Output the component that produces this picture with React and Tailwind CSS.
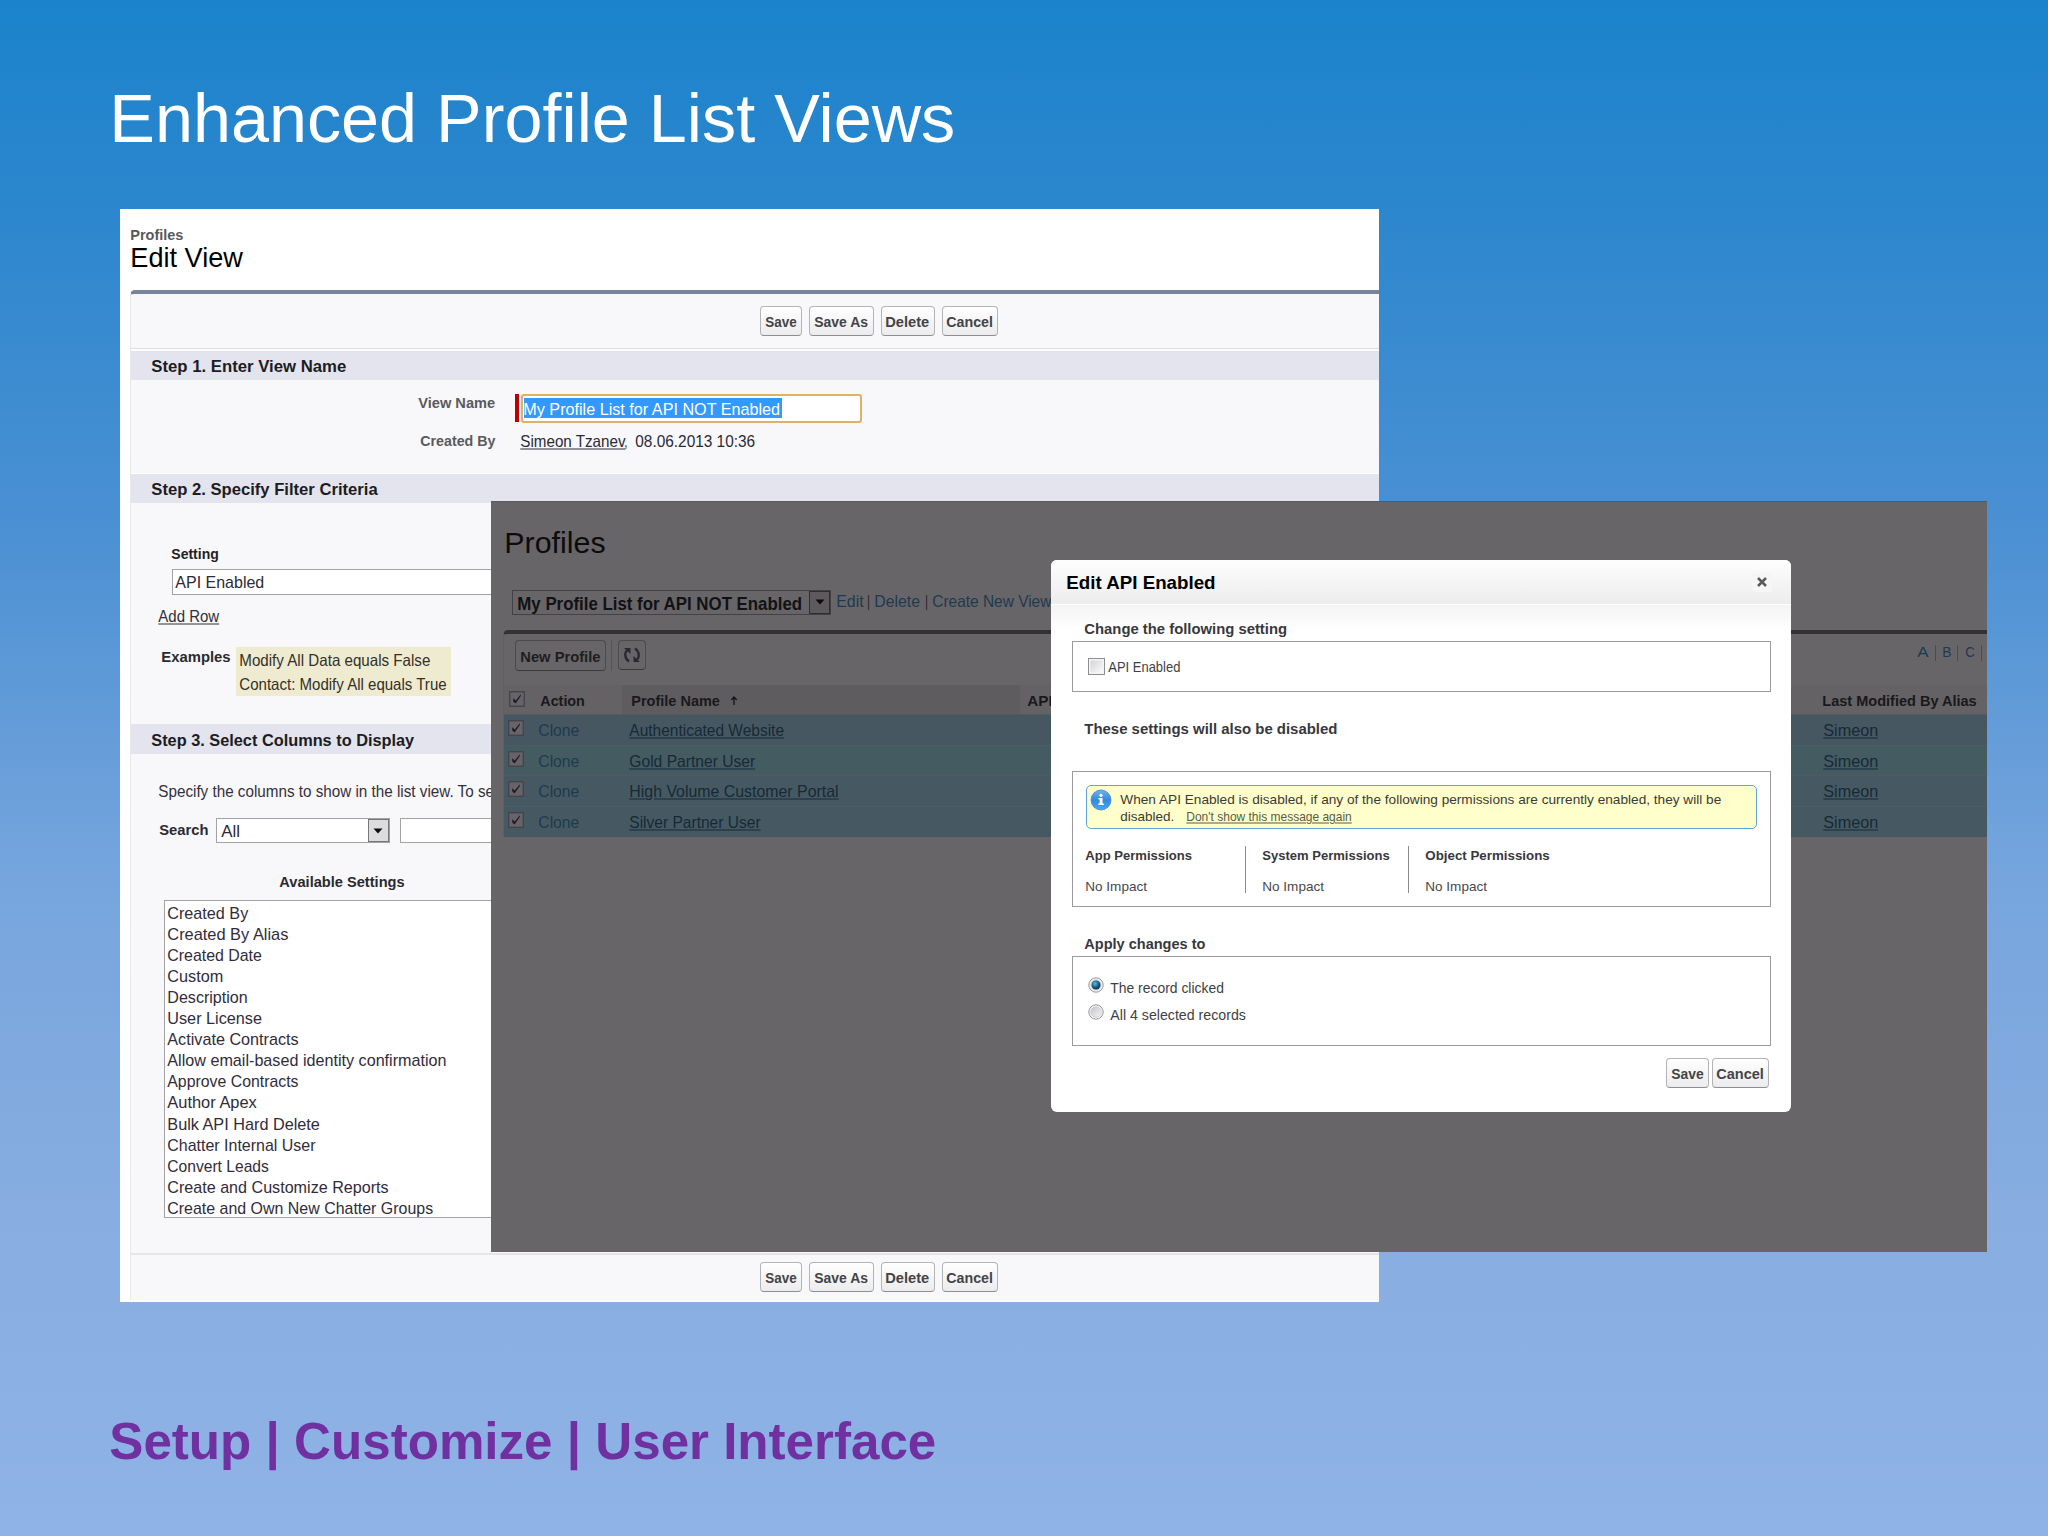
import { useLayoutEffect, useRef, useState } from "react";

// Stretches a single line of text to the width of its box.
function Fit({ className = "", inner = "", children }) {
  const box = useRef(null);
  const text = useRef(null);
  const [scale, setScale] = useState(1);
  useLayoutEffect(() => {
    const w = box.current.getBoundingClientRect().width;
    const n = text.current.offsetWidth;
    if (n) setScale((w + 0.9) / n);
  }, [children]);
  return (
    <span ref={box} className={`block h-5 shrink-0 leading-5 whitespace-nowrap ${className}`}>
      <span
        ref={text}
        className={`inline-block origin-left whitespace-nowrap ${inner}`}
        style={{ transform: `translate(-0.7px, 0.5px) scaleX(${scale})` }}
      >
        {children}
      </span>
    </span>
  );
}

function Button({ className, w, children }) {
  return (
    <div
      className={`flex shrink-0 items-center justify-center rounded-[4px] border-[1.5px] border-[#b4b4b6] border-b-[#8e8e90] bg-linear-to-b from-white to-[#ececee] ${className}`}
    >
      <Fit className={`text-[15px] font-bold text-[#444446] ${w}`}>{children}</Fit>
    </div>
  );
}

function ButtonRow({ className = "" }) {
  return (
    <div className={`flex ${className}`}>
      <Button className="h-[30px] w-[42px]" w="w-[30.5px]">Save</Button>
      <Button className="ml-[7px] h-[30px] w-[65px]" w="w-[53px]">Save As</Button>
      <Button className="ml-[7px] h-[30px] w-[53.5px]" w="w-[43px]">Delete</Button>
      <Button className="ml-[7.5px] h-[30px] w-[56px]" w="w-[45.5px]">Cancel</Button>
    </div>
  );
}

function Band({ className = "", w, children }) {
  return (
    <div className={`flex items-center bg-[#e3e4ee] pl-[21.5px] ${className}`}>
      <Fit className={`text-[17px] font-bold text-[#1c1c22] ${w}`}>{children}</Fit>
    </div>
  );
}

function Caret() {
  return (
    <svg viewBox="0 0 10 6" className="h-[6px] w-[10px]">
      <path d="M0.5 0.5h9L5 5.5z" fill="#0c0c0c" />
    </svg>
  );
}

const SETTINGS = [
  ["Created By", "w-[80px]"],
  ["Created By Alias", "w-[120.5px]"],
  ["Created Date", "w-[93.5px]"],
  ["Custom", "w-[55.5px]"],
  ["Description", "w-[79.5px]"],
  ["User License", "w-[93.5px]"],
  ["Activate Contracts", "w-[130.5px]"],
  ["Allow email-based identity confirmation", "w-[278.5px]"],
  ["Approve Contracts", "w-[130.5px]"],
  ["Author Apex", "w-[89px]"],
  ["Bulk API Hard Delete", "w-[152px]"],
  ["Chatter Internal User", "w-[147.5px]"],
  ["Convert Leads", "w-[101px]"],
  ["Create and Customize Reports", "w-[220px]"],
  ["Create and Own New Chatter Groups", "w-[264.5px]"],
];

function EditView() {
  return (
    <div className="absolute top-[209px] left-[120px] flex h-[1093px] w-[1259px] flex-col overflow-hidden bg-white">
      <div className="h-[81px] shrink-0 pt-[15.3px] pl-[10.5px]">
        <Fit className="w-[52px] text-[14.5px] font-bold text-[#58585c]">Profiles</Fit>
        <Fit className="mt-[3px] w-[111.5px] text-[28px] text-black">Edit View</Fit>
      </div>
      <div className="ml-[9.5px] flex h-[1010px] shrink-0 flex-col rounded-tl-[5px] border-t-[4px] border-l border-t-[#76859a] border-l-[#e8e8ea] bg-[#f8f8fa]">
        <div className="h-[55px] shrink-0 border-b border-[#dfdfe2] pt-[12px] pl-[629.5px]">
          <ButtonRow />
        </div>
        <div className="h-[2px] shrink-0 bg-[#fdfdfd]" />
        <Band className="h-[29px] shrink-0 pt-[1px]" w="w-[194px]">Step 1. Enter View Name</Band>
        <div className="h-[93px] shrink-0 pt-[11.7px]">
          <div className="flex h-[36px] items-start">
            <Fit className="ml-[288px] w-[76px] text-[15px] font-bold text-[#5a5a5e]">View Name</Fit>
            <div className="mt-[2.3px] ml-[20.2px] h-[28.5px] w-[4px] bg-[#c00000]" />
            <div className="mt-[2.6px] ml-[2.4px] h-[28.4px] w-[341px] rounded-[3px] border-[2px] border-[#dfb164] bg-white pt-[1.4px] pl-[1px]">
              <div className="h-[20px] w-[257.5px] bg-[#3399ff]">
                <Fit className="w-[256px] text-[17px] text-white" inner="leading-[21px]">
                  My Profile List for API NOT Enabled
                </Fit>
              </div>
            </div>
          </div>
          <div className="mt-[2.5px] flex">
            <Fit className="ml-[290.5px] w-[74px] text-[15px] font-bold text-[#5a5a5e]">Created By</Fit>
            <Fit className="ml-[25.5px] w-[104px] text-[16.5px] text-[#2a2a36]" inner="underline underline-offset-2">
              Simeon Tzanev
            </Fit>
            <Fit className="ml-[0.5px] w-[2.5px] text-[16.5px] text-[#2a2a36]">,</Fit>
            <Fit className="ml-[8px] w-[118.5px] text-[16.5px] text-[#2a2a36]">08.06.2013 10:36</Fit>
          </div>
        </div>
        <div className="h-px shrink-0 bg-white" />
        <Band className="h-[29px] shrink-0 pt-[0.6px]" w="w-[225px]">Step 2. Specify Filter Criteria</Band>
        <div className="h-[221px] shrink-0 pt-[39.7px]">
          <Fit className="ml-[41.5px] w-[47px] text-[15.5px] font-bold text-[#222226]">Setting</Fit>
          <div className="mt-[6px] ml-[41.5px] h-[26.5px] w-[800px] border border-[#a2a2a6] bg-white pt-[2.5px] pl-[2.5px]">
            <Fit className="w-[88.5px] text-[17px] text-[#2e2a36]">API Enabled</Fit>
          </div>
          <Fit className="mt-[9.7px] ml-[28px] w-[60px] text-[16.5px] text-[#303036]" inner="underline underline-offset-2">
            Add Row
          </Fit>
          <div className="mt-[21.4px] flex">
            <Fit className="ml-[31.5px] w-[68px] text-[15.5px] font-bold text-[#2a2a2e]">Examples</Fit>
            <div className="mt-[0.7px] ml-[6px] h-[49.3px] w-[215px] bg-[#eeebd0] pt-[2.4px] pl-[4px]">
              <Fit className="w-[190px] text-[16.5px] text-[#33302a]">Modify All Data equals False</Fit>
              <Fit className="mt-[4px] w-[206px] text-[16.5px] text-[#33302a]">Contact: Modify All equals True</Fit>
            </div>
          </div>
        </div>
        <Band className="h-[30px] shrink-0 pt-[1.4px]" w="w-[262px]">Step 3. Select Columns to Display</Band>
        <div className="h-[499px] shrink-0 pt-[26.1px]">
          <Fit className="ml-[28px] w-[335px] text-[16.5px] text-[#33303a]">
            Specify the columns to show in the list view. To se
          </Fit>
          <div className="mt-[18px] flex h-[25px]">
            <Fit className="mt-[0.6px] ml-[29px] w-[48.5px] text-[15.5px] font-bold text-[#2a2a2e]">Search</Fit>
            <div className="ml-[7.5px] flex h-[25px] w-[174.5px] justify-between border border-[#a2a2a6] bg-white pl-[5.5px]">
              <Fit className="mt-[1.5px] w-[18px] text-[17px] text-[#2e2a36]">All</Fit>
              <div className="flex h-full w-[21.5px] items-center justify-center border border-[#77777a] bg-[#dcdcde]">
                <Caret />
              </div>
            </div>
            <div className="ml-[10px] h-[25px] w-[300px] border border-[#a2a2a6] bg-white" />
          </div>
          <Fit className="mt-[28.2px] ml-[149px] w-[124.5px] text-[15.5px] font-bold text-[#2a2a2e]">
            Available Settings
          </Fit>
          <div className="mt-[9px] ml-[33.5px] h-[318px] w-[400px] border border-[#a2a2a6] bg-white pt-[0.3px] pl-[3px]">
            {SETTINGS.map(([name, w]) => (
              <div key={name} className="h-[21.1px]">
                <Fit className={`text-[17px] text-[#322c3a] ${w}`} inner="leading-[21.1px]">{name}</Fit>
              </div>
            ))}
          </div>
        </div>
        <div className="h-[47px] shrink-0 border-t-2 border-[#e5e5e7] pt-[7px] pl-[629.5px]">
          <ButtonRow />
        </div>
      </div>
    </div>
  );
}

function DarkCheck({ className = "" }) {
  return (
    <svg viewBox="0 0 16 16" className={`size-4 ${className}`}>
      <rect x="0.75" y="0.75" width="14.5" height="14.5" fill="#66646a" stroke="#434347" strokeWidth="1.3" />
      <path d="M4.2 7.2v3.2l2.4 2.2L11.8 5V3.2L6.8 9.4z" fill="#1e1e26" />
    </svg>
  );
}

const ROWS = [
  ["Authenticated Website", "w-[154px]", "bg-[#465762]"],
  ["Gold Partner User", "w-[125px]", "bg-[#445b62]"],
  ["High Volume Customer Portal", "w-[208px]", "bg-[#465962]"],
  ["Silver Partner User", "w-[130px]", "bg-[#465962]"],
];

const COLS = "grid grid-cols-[33px_85px_398px_796px_172.5px]";

function ProfileList() {
  return (
    <div className="absolute top-[500.5px] left-[491.4px] h-[751.5px] w-[1496px] overflow-hidden border-t border-[#5a5a5c] bg-[#676567] pt-[30.8px]">
      <Fit className="ml-[14px] w-[100px] text-[29.5px] text-[#0c0c0c]">Profiles</Fit>
      <div className="mt-[37.7px] flex h-[25px]">
        <div className="ml-[20.5px] flex h-[25px] w-[319.5px] justify-between border border-[#424244] bg-[#676567] pl-[5.5px]">
          <Fit className="mt-[2px] w-[284px] text-[17.5px] font-bold text-[#121214]">
            My Profile List for API NOT Enabled
          </Fit>
          <div className="flex h-full w-[21.5px] items-center justify-center border-[1.5px] border-[#2e2e30] bg-[#5c5a5c]">
            <Caret />
          </div>
        </div>
        <Fit className="-mt-[0.2px] ml-[6px] w-[26px] text-[16.5px] text-[#1e3a50]">Edit</Fit>
        <Fit className="-mt-[0.2px] ml-[5px] w-[1.5px] text-[16.5px] text-[#1a1a1c]">|</Fit>
        <Fit className="-mt-[0.2px] ml-[5.5px] w-[45px] text-[16.5px] text-[#1e3a50]">Delete</Fit>
        <Fit className="-mt-[0.2px] ml-[5.5px] w-[1.5px] text-[16.5px] text-[#1a1a1c]">|</Fit>
        <Fit className="-mt-[0.2px] ml-[6px] w-[118px] text-[16.5px] text-[#1e3a50]">Create New View</Fit>
      </div>
      <div className="mt-[15.5px] ml-[12px] rounded-tl-[5px] border-t-[4px] border-l border-t-[#333335] border-l-[#605e60]">
        <div className="flex h-[51px] items-start justify-between pt-[6px] pl-[11px]">
          <div className="flex">
            <div className="flex h-[30.5px] w-[90.5px] items-center justify-center rounded-[4px] border-[1.5px] border-[#4c4a4c] border-b-[#3c3a3c] bg-[#676567]">
              <Fit className="w-[79.5px] text-[15px] font-bold text-[#1e1e20]">New Profile</Fit>
            </div>
            <div className="ml-[5.5px] h-[31px] w-px bg-[#555355]" />
            <div className="ml-[5.5px] flex h-[29.5px] w-[28px] items-center justify-center rounded-[4px] border-[1.5px] border-[#4c4a4c] border-b-[#3c3a3c]">
              <svg viewBox="0 0 20 20" className="size-5" fill="none" stroke="#2a2a2e">
                <path d="M7 16.5C2.6 13.5 2.2 8 5.2 5" strokeWidth="2.3" />
                <path d="M2 3h6.5v6z" fill="#2a2a2e" stroke="none" />
                <path d="M13 3.5c4.4 3 4.8 8.500 1.800 11.500" strokeWidth="2.3" />
                <path d="M18 17h-6.500v-6z" fill="#2a2a2e" stroke="none" />
              </svg>
            </div>
          </div>
          <div className="flex pt-[0.5px] pr-[5.5px]">
            <Fit className="w-[10px] text-[14px] text-[#1e3a50]">A</Fit>
            <div className="mt-[4px] ml-[7px] h-4 w-px bg-[#4c4a4c]" />
            <Fit className="ml-[7px] w-[8px] text-[14px] text-[#1e3a50]">B</Fit>
            <div className="mt-[4px] ml-[6.5px] h-4 w-px bg-[#4c4a4c]" />
            <Fit className="ml-[8px] w-[8.5px] text-[14px] text-[#1e3a50]">C</Fit>
            <div className="mt-[4px] ml-[6px] h-4 w-px bg-[#4c4a4c]" />
          </div>
        </div>
        <div className={`h-[28.5px] bg-[#646264] ${COLS}`}>
          <DarkCheck className="mt-[6px] ml-[4.5px]" />
          <Fit className="mt-[5px] ml-[4px] w-[44px] text-[15px] font-bold text-[#19191b]">Action</Fit>
          <div className="flex bg-[#5e5c5e] pl-[9.5px]">
            <Fit className="mt-[5px] w-[88px] text-[15px] font-bold text-[#19191b]">Profile Name</Fit>
            <svg viewBox="0 0 8 10" className="mt-[10.5px] ml-[10px] h-[9px] w-[8px]">
              <path d="M4 10V1.5M1 4.5L4 1.2L7 4.5" fill="none" stroke="#151517" strokeWidth="1.5" />
            </svg>
          </div>
          <Fit className="mt-[5px] ml-[8px] w-[24.5px] text-[15px] font-bold text-[#19191b]">API</Fit>
          <Fit className="mt-[5px] ml-[6.5px] w-[153px] text-[15px] font-bold text-[#19191b]">
            Last Modified By Alias
          </Fit>
        </div>
        {ROWS.map(([name, w, bg]) => (
          <div key={name} className={`h-[30.75px] border-t border-[#4b5c66] ${bg} ${COLS}`}>
            <DarkCheck className="mt-[5px] ml-[3.5px]" />
            <Fit className="mt-[4px] ml-[1.5px] w-[40px] text-[16.5px] text-[#1d3b4e]">Clone</Fit>
            <Fit className={`mt-[4px] ml-[8px] text-[16.5px] text-[#152a36] ${w}`} inner="underline underline-offset-2">
              {name}
            </Fit>
            <span />
            <Fit className="mt-[4px] ml-[7.5px] w-[54px] text-[16.5px] text-[#152a36]" inner="underline underline-offset-2">
              Simeon
            </Fit>
          </div>
        ))}
      </div>
    </div>
  );
}

function Heading({ className, children }) {
  return <Fit className={`ml-[34px] text-[15.5px] font-bold text-[#38383c] ${className}`}>{children}</Fit>;
}

const PERMISSIONS = [
  ["App Permissions", "w-[160px] border-r", "w-[105.5px]"],
  ["System Permissions", "w-[163px] border-r pl-[17px]", "w-[126.5px]"],
  ["Object Permissions", "w-[200px] pl-[17px]", "w-[123.5px]"],
];

function Radio({ checked }) {
  return (
    <svg viewBox="0 0 16 16" className="size-4 shrink-0">
      <defs>
        <linearGradient id="ring" x1="0" y1="0" x2="1" y2="1">
          <stop offset="0" stopColor="#c4c4c8" />
          <stop offset="1" stopColor="#f4f4f4" />
        </linearGradient>
        <radialGradient id="dot" cx="0.4" cy="0.35" r="0.7">
          <stop offset="0" stopColor="#59c2e6" />
          <stop offset="0.6" stopColor="#155a80" />
          <stop offset="1" stopColor="#0b2c44" />
        </radialGradient>
      </defs>
      <circle cx="8" cy="8" r="7.2" fill="#f2f2f2" stroke="#97979b" strokeWidth="1" />
      <circle cx="8" cy="8" r="5.2" fill="url(#ring)" stroke="#c2c2c6" strokeWidth="0.5" />
      {checked && <circle cx="8" cy="8" r="4.5" fill="url(#dot)" />}
    </svg>
  );
}

function Dialog() {
  return (
    <div className="absolute top-[560.3px] left-[1051.3px] h-[551.4px] w-[739.5px] overflow-hidden rounded-[6px] bg-white">
      <div className="flex h-[43.5px] items-start justify-between bg-linear-to-b from-[#fefefe] to-[#ececed] pt-[11.6px] pl-[16px]">
        <Fit className="w-[148px] text-[19px] font-bold text-black">Edit API Enabled</Fit>
        <div className="mt-[0.6px] mr-[18.5px] flex size-[20px] items-center justify-center rounded-[3px] bg-[#f6f6f6]">
          <svg viewBox="0 0 10 10" className="size-[10px]">
            <path d="M1 1l8 8M9 1l-8 8" stroke="#5c5c5e" strokeWidth="2.5" />
          </svg>
        </div>
      </div>
      <div className="border-t-[1.5px] border-white bg-linear-to-b from-[#f4f4f6] to-white to-[26px] pt-[13.4px]">
        <Heading className="w-[202px]">Change the following setting</Heading>
        <div className="mt-[3px] ml-[20.5px] flex h-[50.7px] w-[699px] border border-[#9c9a9e] bg-white pl-[15px]">
          <div className="mt-[15.5px] size-[17px] border-[1.5px] border-[#8e8e92] bg-linear-to-br from-[#cfcfd3] to-white shadow-[inset_0_0_0_1.5px_#f4f4f4]" />
          <Fit className="mt-[14.3px] ml-[4px] w-[71px] text-[15.5px] text-[#404044]">API Enabled</Fit>
        </div>
        <Heading className="mt-[26px] w-[252.5px]">These settings will also be disabled</Heading>
        <div className="mt-[33.2px] ml-[20.5px] h-[136px] w-[699px] border border-[#9c9a9e] bg-white pt-[12.8px] pl-[13px]">
          <div className="flex h-[43.7px] w-[671px] rounded-[5px] border-[1.5px] border-[#5fa6de] bg-[#ffffcc]">
            <svg viewBox="0 0 22 22" className="mt-[3.5px] ml-[3px] size-[22px] shrink-0">
              <defs>
                <linearGradient id="info" x1="0" y1="0" x2="0" y2="1">
                  <stop offset="0" stopColor="#74b4ee" />
                  <stop offset="0.5" stopColor="#3388e0" />
                  <stop offset="1" stopColor="#4aa8f4" />
                </linearGradient>
              </defs>
              <circle cx="11" cy="11" r="10" fill="url(#info)" stroke="#4484c4" strokeWidth="0.8" />
              <circle cx="11" cy="6.3" r="1.6" fill="#fff" />
              <path d="M8.500 9h4v5.500h1.300v1.500H8.300v-1.500h1.400v-4H8.500z" fill="#fff" />
            </svg>
            <div className="mt-[2.8px] ml-[9.7px]">
              <Fit className="w-[600px] text-[13px] text-[#3c3a34]">
                When API Enabled is disabled, if any of the following permissions are currently enabled, they will be
              </Fit>
              <div className="-mt-[3.1px] flex">
                <Fit className="w-[53px] text-[13px] text-[#3c3a34]">disabled.</Fit>
                <Fit className="ml-[12.5px] w-[165px] text-[13px] text-[#5a5a48]" inner="underline underline-offset-2">
                  Don't show this message again
                </Fit>
              </div>
            </div>
          </div>
          <div className="mt-[17.6px] flex h-[47px]">
            {PERMISSIONS.map(([name, col, w]) => (
              <div key={name} className={`h-[47px] border-[#8c8c90] ${col}`}>
                <Fit className={`-mt-[1.5px] text-[13.5px] font-bold text-[#38383c] ${w}`}>{name}</Fit>
                <Fit className="mt-[11px] w-[60.5px] text-[13px] text-[#48484c]">No Impact</Fit>
              </div>
            ))}
          </div>
        </div>
        <Heading className="mt-[26.3px] w-[120px]">Apply changes to</Heading>
        <div className="mt-[2.7px] ml-[20.5px] h-[90px] w-[699px] border border-[#9c9a9e] bg-white pt-[20.4px] pl-[15px]">
          <div className="flex h-5">
            <Radio checked />
            <Fit className="ml-[7.5px] w-[113px] text-[15.5px] text-[#404044]">The record clicked</Fit>
          </div>
          <div className="mt-[6.9px] flex h-5">
            <Radio />
            <Fit className="ml-[7.5px] w-[134.5px] text-[15.5px] text-[#404044]">
              All 4 selected records
            </Fit>
          </div>
        </div>
        <div className="mt-[11.7px] ml-[614.7px] flex">
          <Button className="h-[30.5px] w-[43.5px]" w="w-[31.5px]">Save</Button>
          <Button className="ml-[2.5px] h-[30.5px] w-[57px]" w="w-[46.5px]">Cancel</Button>
        </div>
      </div>
    </div>
  );
}

export default function App() {
  return (
    <div className="relative flex h-[1536px] w-[2048px] flex-col justify-between overflow-hidden bg-[linear-gradient(to_bottom,#1a83cc_0%,#2a86cd_12%,#4a90d3_34%,#76a5dd_57%,#88ade1_80%,#8fb3e6_100%)] font-['Liberation_Sans',Arial,sans-serif]">
      <h1 className="pt-[107.5px] pl-[109.5px]">
        <Fit className="w-[845px] text-[69px] text-white">Enhanced Profile List Views</Fit>
      </h1>
      <EditView />
      <ProfileList />
      <Dialog />
      <div className="h-[106.5px] pl-[110px]">
        <Fit className="w-[826px] text-[52px] font-bold text-[#7030a0]">Setup | Customize | User Interface</Fit>
      </div>
    </div>
  );
}
